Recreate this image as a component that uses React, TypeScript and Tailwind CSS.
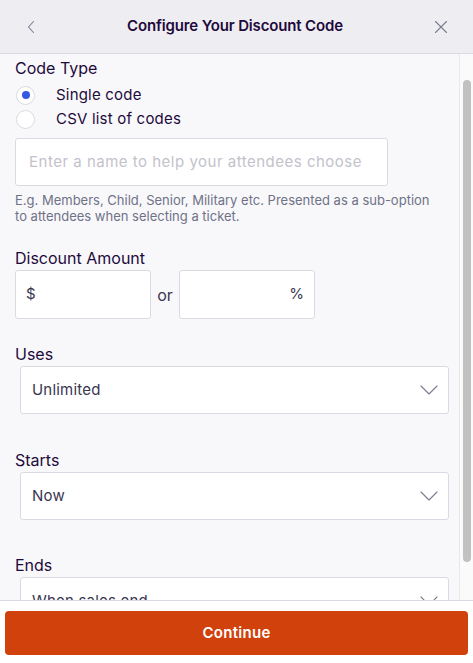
import React from 'react';

const font = { fontFamily: 'Inter, "Noto Sans", sans-serif' };

function ChevronDown() {
  return (
    <svg width="18" height="10" viewBox="0 0 18 10" fill="none" className="shrink-0">
      <path d="M1 1l8 8 8-8" stroke="#7a7c8f" strokeWidth="1.1" strokeLinecap="round" strokeLinejoin="round" />
    </svg>
  );
}

function Select({ value }: { value: string }) {
  return (
    <div className="ml-[5px] w-[429px] h-[48px] shrink-0 bg-white border border-[#dbdae3] rounded-[3px] flex items-center justify-between pl-[11px] pr-[10px]">
      <span className="text-[15px] text-[#39364f] tracking-[0.2px]">{value}</span>
      <ChevronDown />
    </div>
  );
}

function Label({ children, className = '' }: { children: React.ReactNode; className?: string }) {
  return <div className={`text-[16px] leading-[24px] text-[#1e0a3c] ${className}`}>{children}</div>;
}

function Radio({ checked, label }: { checked?: boolean; label: string }) {
  return (
    <div className="h-[24px] flex items-center">
      <div className="ml-[1px] w-[19px] h-[19px] rounded-full border border-[#dbdae3] bg-white flex items-center justify-center">
        {checked && <div className="w-[8px] h-[8px] rounded-full bg-[#3659e3]" />}
      </div>
      <span className="ml-[21px] text-[15px] text-[#1e0a3c] tracking-[0.2px]">{label}</span>
    </div>
  );
}

export default function App() {
  return (
    <div style={font} className="w-[473px] h-[663px] flex flex-col bg-white overflow-hidden">
      <header className="h-[54px] shrink-0 bg-[#eeedf2] border-b border-[#dbdae3] flex items-center justify-between pl-[26px] pr-[25px]">
        <svg width="10" height="14" viewBox="0 0 10 14" fill="none">
          <path d="M7.5 1.5L2.5 7l5 5.5" stroke="#7a7c8f" strokeWidth="1.1" strokeLinecap="round" strokeLinejoin="round" />
        </svg>
        <h1 className="text-[15px] font-semibold text-[#1e0a3c] tracking-[-0.15px]">Configure Your Discount Code</h1>
        <svg width="14" height="14" viewBox="0 0 14 14" fill="none">
          <path d="M1.5 1.5l11 11M12.5 1.5l-11 11" stroke="#7a7c8f" strokeWidth="1.1" strokeLinecap="round" />
        </svg>
      </header>

      <div className="flex-1 flex min-h-0">
        <div className="w-[459px] bg-[#f8f8fa] overflow-hidden px-[15px] flex flex-col">
          <Label className="mt-[2px]">Code Type</Label>
          <div className="mt-[3px] flex flex-col">
            <Radio checked label="Single code" />
            <Radio label="CSV list of codes" />
          </div>
          <div className="mt-[7px] w-[373px] h-[48px] shrink-0 bg-white border border-[#dbdae3] rounded-[3px] flex items-center px-[13px]">
            <span className="text-[15px] text-[#c3c2cb] tracking-[0.5px]">Enter a name to help your attendees choose</span>
          </div>
          <p className="mt-[6px] text-[13px] leading-[16px] text-[#6f7287]">
            E.g. Members, Child, Senior, Military etc. Presented as a sub-option to attendees when selecting a ticket.
          </p>

          <Label className="mt-[22px]">Discount Amount</Label>
          <div className="flex items-center">
            <div className="w-[136px] h-[49px] bg-white border border-[#dbdae3] rounded-[3px] flex items-center px-[10px]">
              <span className="text-[15px] text-[#39364f]">$</span>
            </div>
            <span className="w-[28px] text-center text-[16px] text-[#39364f]">or</span>
            <div className="w-[136px] h-[49px] bg-white border border-[#dbdae3] rounded-[3px] flex items-center justify-end px-[10px]">
              <span className="text-[15px] text-[#39364f]">%</span>
            </div>
          </div>

          <Label className="mt-[23px]">Uses</Label>
          <Select value="Unlimited" />

          <Label className="mt-[34px]">Starts</Label>
          <Select value="Now" />

          <Label className="mt-[33px]">Ends</Label>
          <Select value="When sales end" />
        </div>
        <div className="w-[14px] bg-[#fafafa] border-l border-[#e8e8e8] flex justify-center">
          <div className="mt-[26px] w-[8px] h-[482px] rounded-full bg-[#c1c1c1]" />
        </div>
      </div>

      <footer className="h-[63px] shrink-0 bg-white border-t border-[#dbdae3] px-[5px] pt-[10px]">
        <button className="w-full h-[44px] bg-[#d1410c] rounded-[4px] text-white text-[15px] font-semibold tracking-[0.3px]">
          Continue
        </button>
      </footer>
    </div>
  );
}
